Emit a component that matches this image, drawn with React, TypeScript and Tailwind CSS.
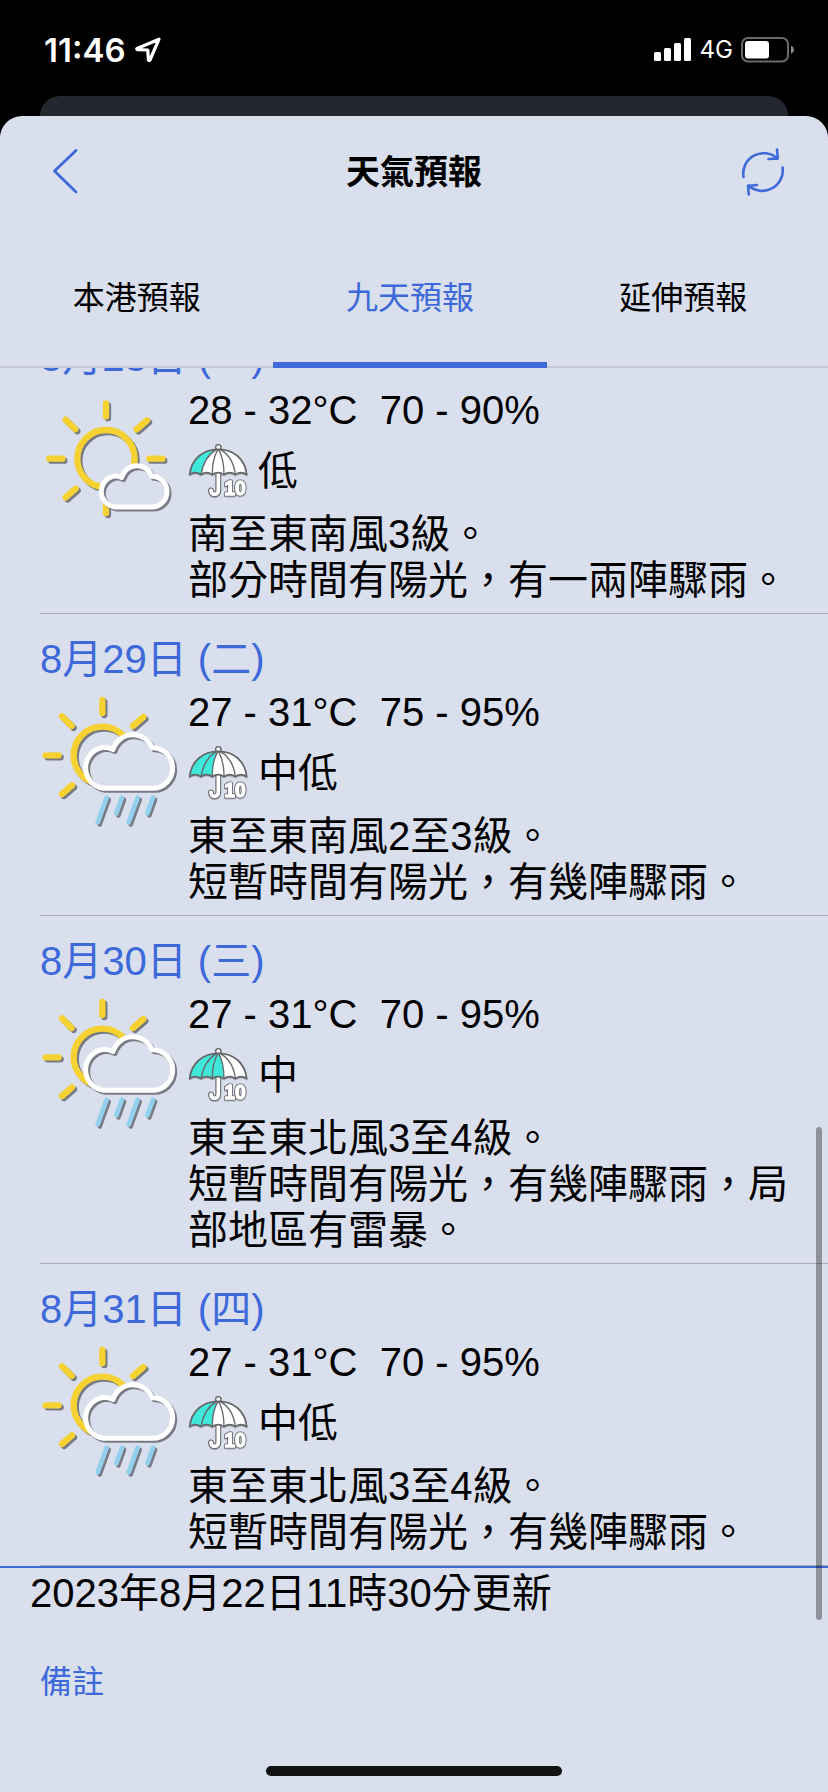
import { useState } from "react";

type Chance = 1 | 2 | 3;

interface Forecast {
    date: string;
    icon: "sunny" | "rain";
    temp: string;
    humidity: string;
    chance: Chance;
    chanceText: string;
    wind: string;
    weather: string;
}

const forecasts: Forecast[] = [
    {
        date: "8月28日 (一)",
        icon: "sunny",
        temp: "28 - 32°C",
        humidity: "70 - 90%",
        chance: 1,
        chanceText: "低",
        wind: "南至東南風3級。",
        weather: "部分時間有陽光，有一兩陣驟雨。",
    },
    {
        date: "8月29日 (二)",
        icon: "rain",
        temp: "27 - 31°C",
        humidity: "75 - 95%",
        chance: 2,
        chanceText: "中低",
        wind: "東至東南風2至3級。",
        weather: "短暫時間有陽光，有幾陣驟雨。",
    },
    {
        date: "8月30日 (三)",
        icon: "rain",
        temp: "27 - 31°C",
        humidity: "70 - 95%",
        chance: 3,
        chanceText: "中",
        wind: "東至東北風3至4級。",
        weather: "短暫時間有陽光，有幾陣驟雨，局部地區有雷暴。",
    },
    {
        date: "8月31日 (四)",
        icon: "rain",
        temp: "27 - 31°C",
        humidity: "70 - 95%",
        chance: 2,
        chanceText: "中低",
        wind: "東至東北風3至4級。",
        weather: "短暫時間有陽光，有幾陣驟雨。",
    },
];

const tabs = ["本港預報", "九天預報", "延伸預報"];

function StatusBar() {
    return (
        <div className="flex h-24 items-center justify-between pt-1 pr-8 pl-11 text-white font-['Inter',sans-serif]">
            <div className="flex items-center gap-2">
                <span className="text-[33px] leading-8 font-semibold">11:46</span>
                <svg className="size-7" viewBox="0 0 28 28" fill="none" stroke="currentColor" strokeWidth="3.2" strokeLinejoin="round">
                    <path d="M25 3.2 L3 12.4 Q2.2 13.4 3.6 13.6 L13.8 14 L14.4 24 Q15 25.2 16 24 Z" />
                </svg>
            </div>
            <div className="flex items-center gap-2">
                <svg className="h-6 w-[38px]" viewBox="0 0 38 24" fill="currentColor">
                    <rect x="0" y="14" width="7" height="9" rx="1.5" />
                    <rect x="10" y="10" width="7" height="13" rx="1.5" />
                    <rect x="20" y="5" width="7" height="18" rx="1.5" />
                    <rect x="30" y="0" width="7" height="23" rx="1.5" />
                </svg>
                <span className="text-2xl leading-6">4G</span>
                <svg className="h-[26px] w-[55px]" viewBox="0 0 55 26">
                    <rect x="1" y="1" width="46" height="23.5" rx="6" fill="none" stroke="#6b6b6b" strokeWidth="2" />
                    <rect x="4" y="4" width="24" height="17.5" rx="3" fill="#fff" />
                    <path d="M50 8.5 Q53 10 53 12.8 Q53 15.6 50 17 Z" fill="#8a8a8a" />
                </svg>
            </div>
        </div>
    );
}

function Sun({ full }: { full: boolean }) {
    return (
        <g
            className="drop-shadow-[6px_6px_2px_#787b84]"
            fill="none"
            stroke="#f5d232"
            strokeWidth="19"
            strokeLinecap="round"
        >
            <circle cx="198" cy="215" r="86" />
            <path d="M198 49V88M28 215H67M77 98L106 127M321 100L290 127M107 305L77 331" />
            {full && <path d="M328 215H367M198 330V378" />}
        </g>
    );
}

function Cloud({ d }: { d: string }) {
    return (
        <>
            <path d={d} fill="#d9dfec" />
            <g className="drop-shadow-[6px_6px_2px_#787b84]">
                <path d={d} fill="none" stroke="#fff" strokeWidth="15" strokeLinejoin="round" />
            </g>
        </>
    );
}

function WeatherIcon({ type }: { type: Forecast["icon"] }) {
    if (type === "sunny") {
        return (
            <svg className="size-36" viewBox="0 0 432 432" role="img" aria-label="部分時間有陽光">
                <Sun full />
                <Cloud d="M224 360A47 47 0 0 1 224 267Q234 266 245 272A47 47 0 0 1 335 268A46 46 0 0 1 335 360Z" />
            </svg>
        );
    }
    return (
        <svg className="size-36 overflow-visible" viewBox="0 0 432 432" role="img" aria-label="短暫陽光有驟雨">
            <g transform="translate(-11 -16)">
                <Sun full={false} />
            </g>
            <Cloud d="M191 298A62 62 0 0 1 191 175Q206 175 219 182A62 62 0 0 1 336 176A61 61 0 0 1 338 298Z" />
            <g
                className="drop-shadow-[6px_6px_2px_#787b84]"
                stroke="#92d0ee"
                strokeWidth="14"
                strokeLinecap="round"
            >
                <path d="M200 326L173 400M246 326L229 373M293 326L266 400M339 326L322 373" />
            </g>
        </svg>
    );
}

// canopy area that is coloured for each chance of rain
const fills: Record<Chance, string> = {
    1: "M5 92C10 44 46 16 86 16Q48 38 39 92Q22 80 5 92Z",
    2: "M5 92C10 44 46 16 90 16Q72 46 73 92Q56 80 39 92Q22 80 5 92Z",
    3: "M5 92C10 44 46 16 92 16Q108 46 108 92Q90 80 73 92Q56 80 39 92Q22 80 5 92Z",
};

function Umbrella({ chance }: { chance: Chance }) {
    const canopy =
        "M5 92C10 44 46 16 91 16C136 16 171 44 176 92Q159 80 142 92Q125 80 108 92Q90 80 73 92Q56 80 39 92Q22 80 5 92Z";
    return (
        <svg className="h-[54px] w-[60px]" viewBox="0 0 180 162" fill="none" strokeLinejoin="round">
            <g className="drop-shadow-[0_2px_2px_#9a9da6]">
                <path d="M91 86V138Q91 151 79 151Q70 151 69 139" stroke="#66676b" strokeWidth="17" strokeLinecap="round" />
                <path d="M91 86V138Q91 151 79 151Q70 151 69 139" stroke="#fff" strokeWidth="11" strokeLinecap="round" />
                <circle cx="91" cy="10" r="8" fill="#fff" stroke="#66676b" strokeWidth="4" />
                <path d={canopy} fill="#fff" />
                <path d={fills[chance]} fill="#40e8da" />
                <path d={canopy} stroke="#66676b" strokeWidth="5" />
                <path
                    d="M86 16Q48 38 39 92M90 16Q72 46 73 92M92 16Q108 46 108 92M96 16Q136 38 142 92"
                    stroke="#66676b"
                    strokeWidth="4"
                />
                {/* thick outline with a rounder white face inside it */}
                <g className="font-['Liberation_Sans',sans-serif] text-[58px] font-bold">
                    <text x="109" y="152" stroke="#66676b" strokeWidth="9" aria-hidden="true">
                        10
                    </text>
                    <text x="109" y="152" fill="#fff" stroke="#fff" strokeWidth="4">
                        10
                    </text>
                </g>
            </g>
        </svg>
    );
}

function ForecastRow({ item }: { item: Forecast }) {
    return (
        <li className="ml-10 border-b border-[#a9adba] pt-[22px] pb-[10px]">
            <h2 className="text-[#3d69da]">{item.date}</h2>
            <div className="mt-[7px] flex items-start">
                <div className="h-36 w-[148px] shrink-0">
                    <WeatherIcon type={item.icon} />
                </div>
                <div className="min-w-0 flex-1 pr-6">
                    <p className="whitespace-pre">{`${item.temp}  ${item.humidity}`}</p>
                    <div className="mt-[11px] mb-[13px] flex items-center gap-[10px]">
                        <Umbrella chance={item.chance} />
                        <span>{item.chanceText}</span>
                    </div>
                    <p>{item.wind}</p>
                    <p>{item.weather}</p>
                </div>
            </div>
        </li>
    );
}

export default function App() {
    const [active, setActive] = useState(1);

    return (
        <div
            lang="zh-Hant"
            className="flex min-h-screen flex-col bg-black font-['Liberation_Sans','Noto_Sans_CJK_TC',sans-serif]"
        >
            <StatusBar />
            <div className="mx-10 h-5 rounded-t-[20px] bg-[#24272f]" />

            <div className="flex flex-1 flex-col rounded-t-[22px] bg-[#d9dfec]">
                <header className="flex h-28 items-center justify-between px-10">
                    <button type="button" aria-label="返回" className="flex size-12 items-center justify-center text-[#3d69da]">
                        <svg className="size-12" viewBox="0 0 48 48" fill="none" stroke="currentColor" strokeWidth="2.8" strokeLinecap="round" strokeLinejoin="round">
                            <path d="M36 2.5 L14.5 23 L36 44" />
                        </svg>
                    </button>
                    <h1 className="text-[34px] leading-10 font-bold">天氣預報</h1>
                    <button type="button" aria-label="重新整理" className="flex size-12 items-center justify-center text-[#3d69da]">
                        <svg className="size-12" viewBox="0 0 48 48" fill="none" stroke="currentColor" strokeWidth="2.6" strokeLinecap="round" strokeLinejoin="round">
                            <path d="M3.5 29 A20.5 20.5 0 0 1 37.5 10.5 M28.5 11 L37.8 10.5 L37 1.6" />
                            <path d="M42.6 19.5 A20.5 20.5 0 0 1 8.5 37.5 M17 37 L8 38 L8.8 46.5" />
                        </svg>
                    </button>
                </header>

                <nav className="flex h-[140px] border-b-2 border-[#c5c7d1] pt-[2px] pr-2">
                    {tabs.map((tab, i) => (
                        <button
                            key={tab}
                            type="button"
                            onClick={() => setActive(i)}
                            className={
                                i === active
                                    ? "relative -mb-[2px] flex-1 border-b-[6px] border-[#3d69da] pt-[4px] text-[32px] leading-10 text-[#3d69da]"
                                    : "flex-1 text-[32px] leading-10 text-black"
                            }
                        >
                            {tab}
                        </button>
                    ))}
                </nav>

                <main className="relative overflow-hidden text-[40px] leading-[46px] text-black">
                    {/* list is scrolled part of the way through its first row */}
                    <ul className="-mt-14">
                        {forecasts.map((item) => (
                            <ForecastRow key={item.date} item={item} />
                        ))}
                    </ul>
                    <p className="border-t-2 border-[#3d69da] pt-[2px] pb-1 pl-[30px]">2023年8月22日11時30分更新</p>
                    <div className="absolute top-[759px] right-[6px] bottom-0 w-[6px] rounded-full bg-black/35" />
                </main>

                <footer className="flex flex-1 flex-col items-start pt-[42px] pb-4">
                    <button type="button" className="ml-10 text-[32px] leading-10 text-[#3d69da]">
                        備註
                    </button>
                    <div className="mt-auto h-[10px] w-[296px] self-center rounded-full bg-[#121212]" />
                </footer>
            </div>
        </div>
    );
}
